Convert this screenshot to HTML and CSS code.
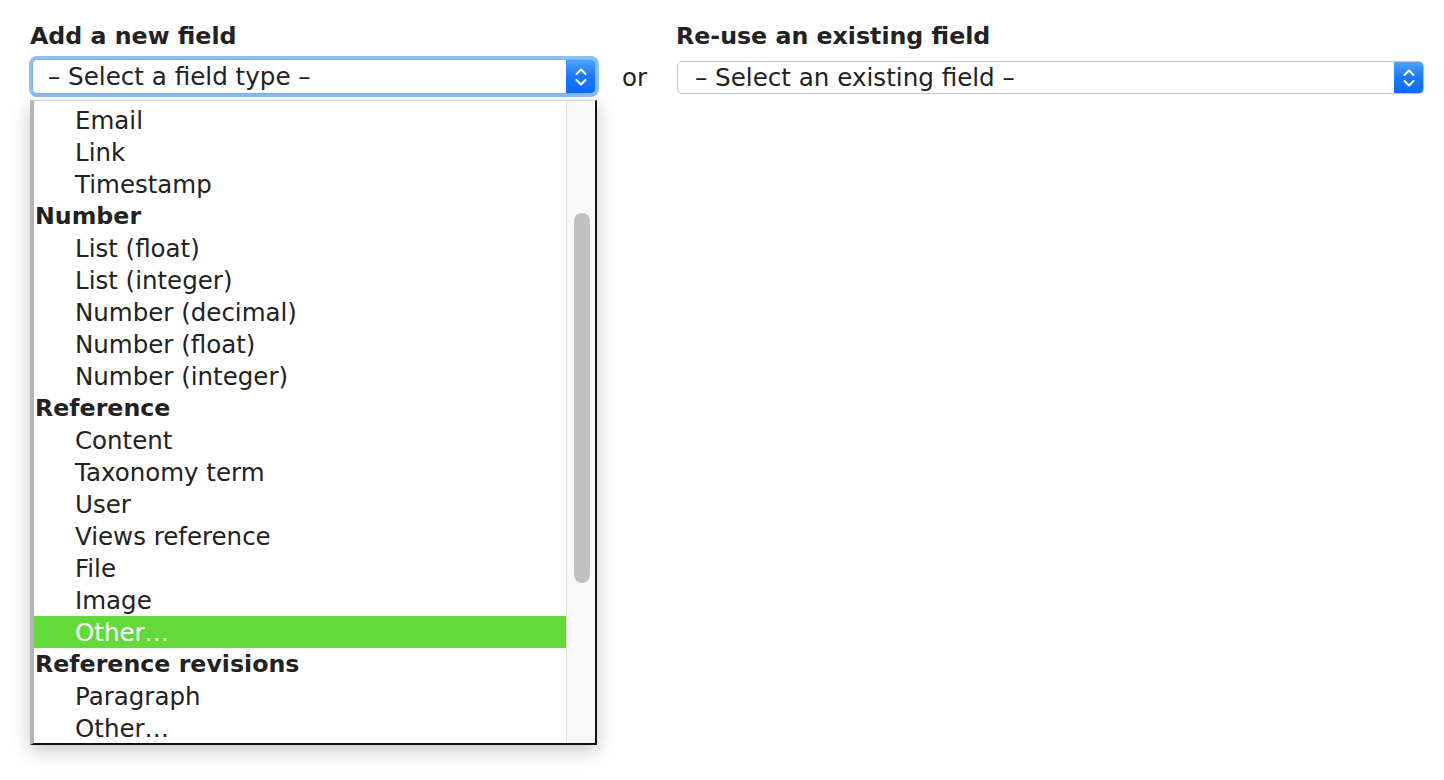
FILE: index.html
```html
<!DOCTYPE html>
<html>
<head>
<meta charset="utf-8">
<link rel="stylesheet" href="styles.css">
</head>
<body>
<div class="page">
  <div class="field-col new-col">
    <div class="label">Add a new field</div>
    <div class="select focused">
      <span class="select-text">– Select a field type –</span>
      <span class="select-btn"><svg width="14" height="22" viewBox="0 0 14 22"><path d="M2.5 8 L7 3.5 L11.5 8 M2.5 14 L7 18.5 L11.5 14" fill="none" stroke="#fff" stroke-width="2" stroke-linecap="round" stroke-linejoin="round"/></svg></span>
    </div>
    <div class="dropdown">
      <div class="list">
        <div class="opt">Email</div>
        <div class="opt">Link</div>
        <div class="opt">Timestamp</div>
        <div class="group">Number</div>
        <div class="opt">List (float)</div>
        <div class="opt">List (integer)</div>
        <div class="opt">Number (decimal)</div>
        <div class="opt">Number (float)</div>
        <div class="opt">Number (integer)</div>
        <div class="group">Reference</div>
        <div class="opt">Content</div>
        <div class="opt">Taxonomy term</div>
        <div class="opt">User</div>
        <div class="opt">Views reference</div>
        <div class="opt">File</div>
        <div class="opt">Image</div>
        <div class="opt selected">Other…</div>
        <div class="group">Reference revisions</div>
        <div class="opt">Paragraph</div>
        <div class="opt">Other…</div>
      </div>
      <div class="scrollbar"><div class="thumb"></div></div>
    </div>
  </div>
  <div class="or">or</div>
  <div class="field-col existing-col">
    <div class="label">Re-use an existing field</div>
    <div class="select">
      <span class="select-text">– Select an existing field –</span>
      <span class="select-btn"><svg width="14" height="22" viewBox="0 0 14 22"><path d="M2.5 8 L7 3.5 L11.5 8 M2.5 14 L7 18.5 L11.5 14" fill="none" stroke="#fff" stroke-width="2" stroke-linecap="round" stroke-linejoin="round"/></svg></span>
    </div>
  </div>
</div>
</body>
</html>
```
FILE: styles.css
```css
html, body {
  margin: 0;
  padding: 0;
  background: #fff;
}
body {
  font-family: "DejaVu Sans", "Open Sans", sans-serif;
  color: #222;
  width: 1444px;
  height: 780px;
  overflow: hidden;
}
.page {
  display: flex;
  align-items: flex-start;
  padding: 21px 20px 0 30px;
}
.field-col {
  display: flex;
  flex-direction: column;
  position: relative;
}
.new-col {
  width: 568px;
}
.existing-col {
  flex: 1;
}
.label {
  font-weight: bold;
  font-size: 23.7px;
  line-height: 30px;
  height: 30px;
  color: #222;
  white-space: nowrap;
}
.existing-col .label {
  margin-left: -1px;
}
.select {
  display: flex;
  align-items: center;
  height: 33px;
  border: 1px solid #c6c6c6;
  border-radius: 5px;
  background: #fff;
  margin-top: 10px;
  overflow: hidden;
  box-sizing: border-box;
}
.select.focused {
  margin: 8px 2px 0 2px;
  border-color: #7ab2f0;
  box-shadow: 0 0 0 3px #8dbff5;
  height: 35px;
}
.select-text {
  flex: 1;
  font-size: 24.6px;
  padding-left: 15px;
  white-space: nowrap;
  color: #222;
  line-height: 30px;
}
.existing-col .select-text {
  padding-left: 17px;
}
.select-btn {
  width: 29px;
  align-self: stretch;
  display: flex;
  align-items: center;
  justify-content: center;
  background: linear-gradient(#4da3fd, #1a78ff 50%, #0b6dfe);
}
.or {
  font-size: 24.5px;
  width: 55px;
  padding-left: 24px;
  margin-top: 42px;
  line-height: 30px;
  color: #222;
}
.dropdown {
  position: absolute;
  left: 0;
  top: 79px;
  width: 567px;
  height: 645px;
  box-sizing: border-box;
  border-left: 4px solid #b4b4b4;
  border-right: 2px solid #111;
  border-bottom: 2px solid #111;
  border-top: 1px solid #d0d0d0;
  background: #fff;
  box-shadow: 0 6px 18px rgba(0,0,0,0.22);
  display: flex;
  overflow: hidden;
}
.list {
  flex: 1;
  padding-top: 3px;
}
.opt, .group {
  height: 32px;
  line-height: 33px;
  font-size: 24.5px;
  white-space: nowrap;
  color: #222;
}
.opt {
  padding-left: 41px;
}
.group {
  font-weight: bold;
  font-size: 23.7px;
  padding-left: 1px;
}
.opt.selected {
  background: #62da3a;
  color: #fff;
}
.scrollbar {
  width: 28px;
  background: #f8f8f8;
  border-left: 1px solid #e6e6e6;
  position: relative;
}
.thumb {
  position: absolute;
  left: 7px;
  top: 112px;
  width: 16px;
  height: 370px;
  background: #c1c1c1;
  border-radius: 8px;
}
```
